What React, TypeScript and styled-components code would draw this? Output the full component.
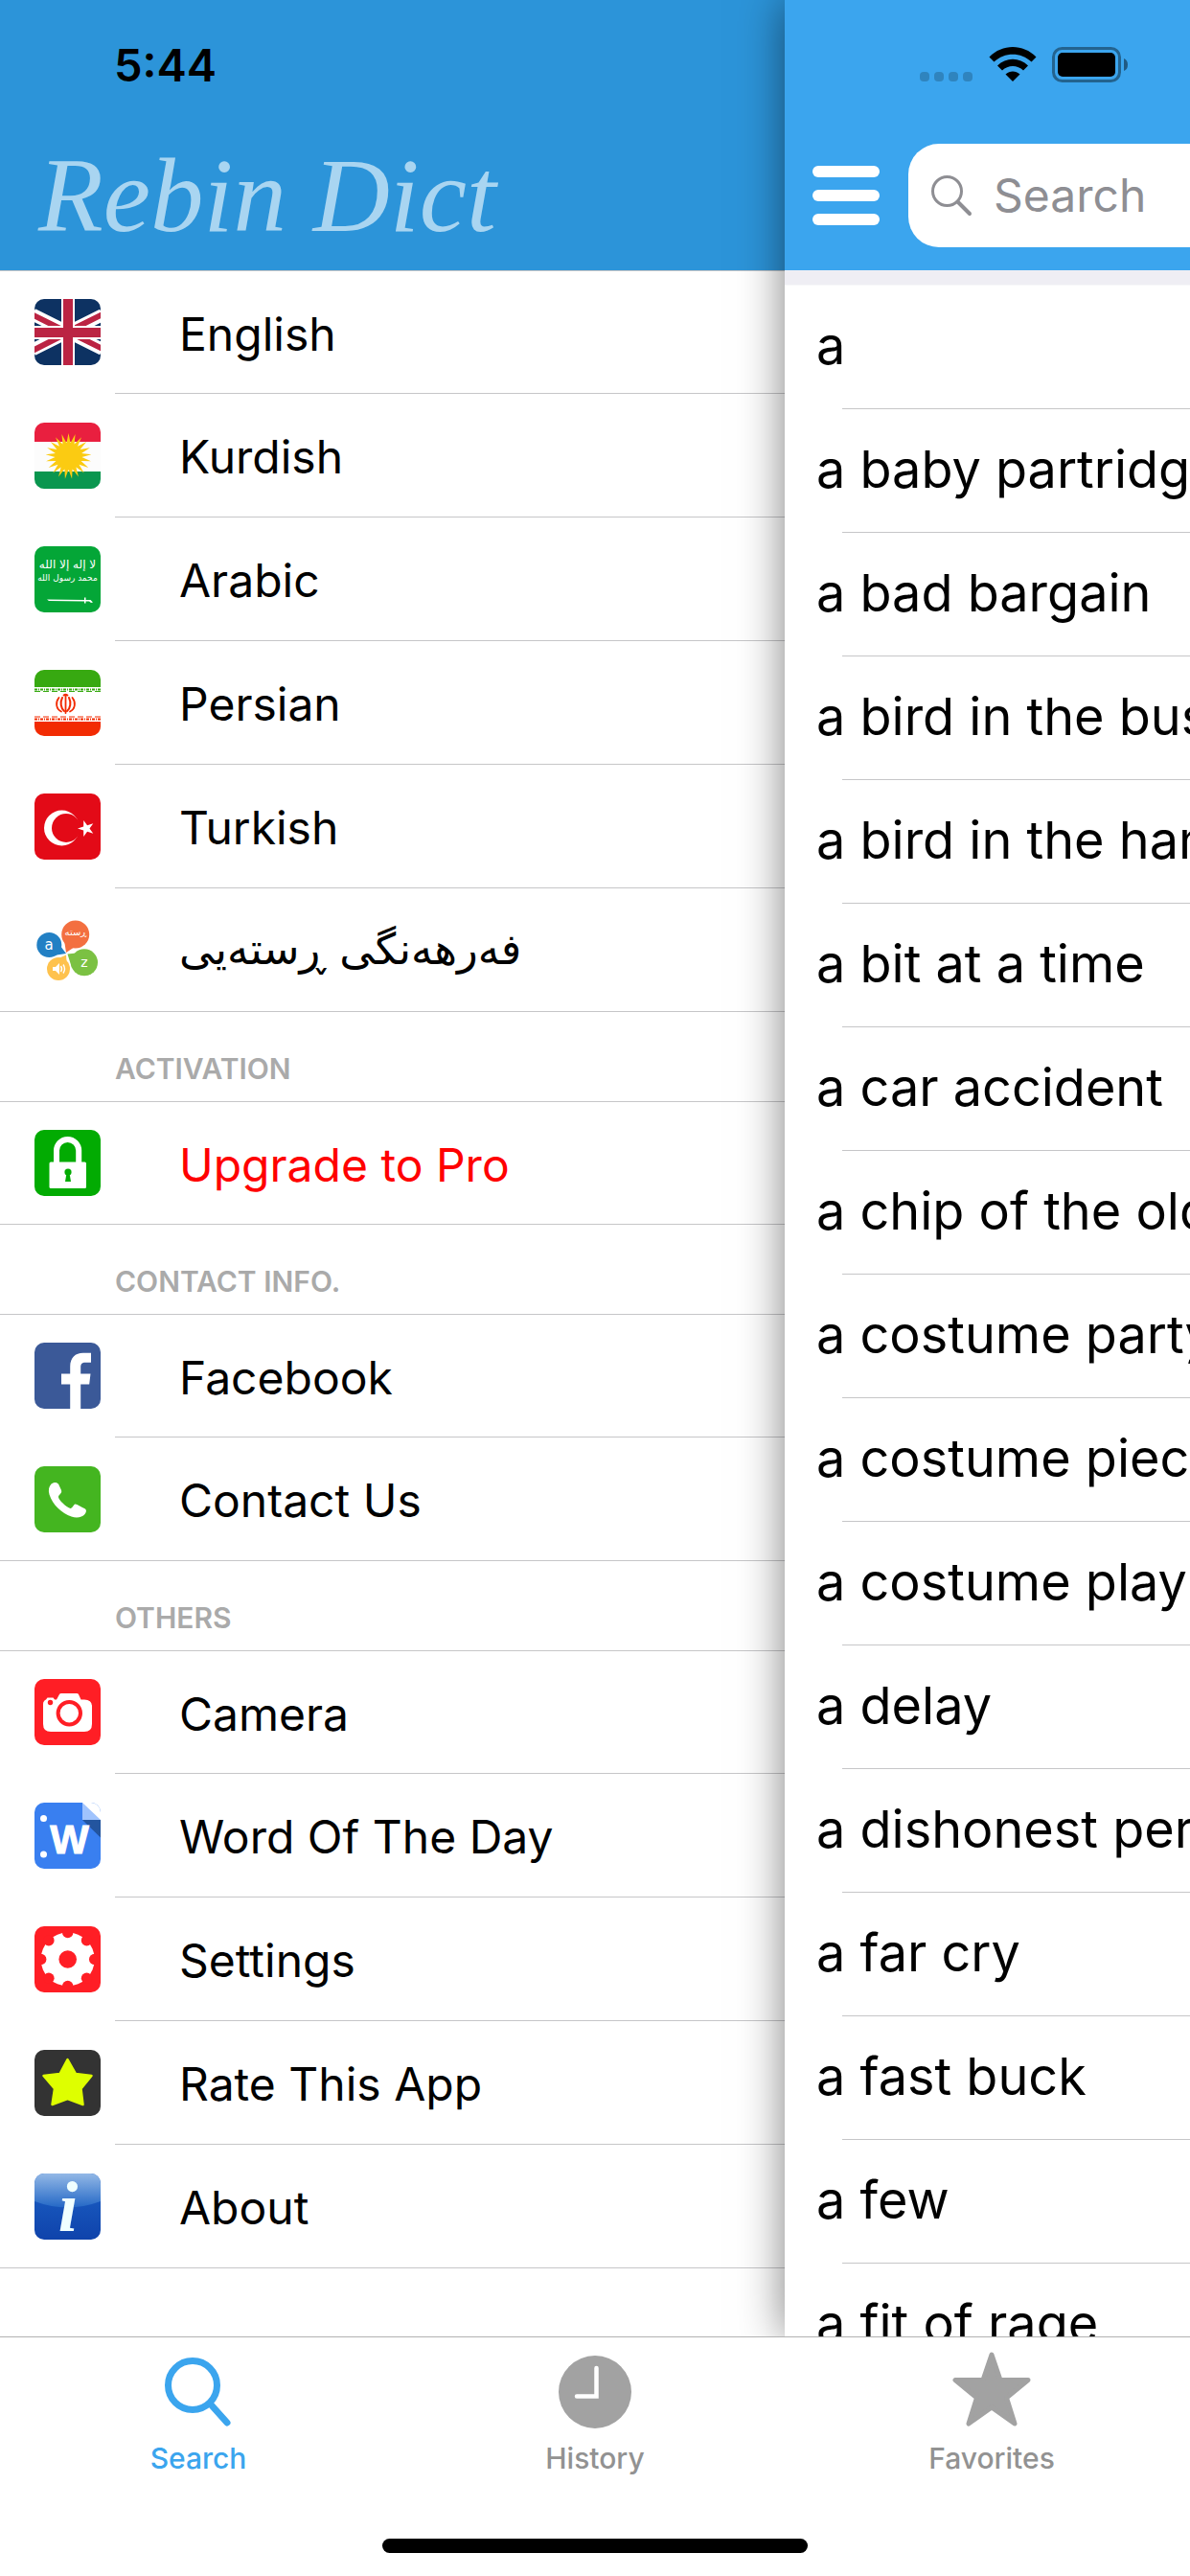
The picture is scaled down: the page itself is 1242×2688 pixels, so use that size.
import React from "react";
import styled, { createGlobalStyle } from "styled-components";

const GlobalStyle = createGlobalStyle`
  *, *::before, *::after { box-sizing: border-box; }
  body { margin: 0; background: #fff; }
  button, input { font: inherit; }
  ul { list-style: none; margin: 0; padding: 0; }
  h1, h2 { margin: 0; }
`;

const hairline = "#c6c6c8";
const brand = "#3ba5ee";
const sans = `Inter, "Liberation Sans", "DejaVu Sans", sans-serif`;

const Screen = styled.div`
  display: flex;
  flex-direction: column;
  height: 100vh;
  overflow: hidden;
  background: #fff;
  color: #000;
  font-family: ${sans};
`;

const Stage = styled.div`
  flex: 1;
  min-height: 0;
  display: grid;
  grid-template-columns: minmax(0, 1fr) 423px;
  grid-template-rows: minmax(0, 1fr);
  overflow: hidden;
`;

/* ---------- drawer ---------- */

const Drawer = styled.nav`
  min-width: 0;
  overflow: hidden;
  background: #fff;
`;

const DrawerHeader = styled.header`
  display: flex;
  flex-direction: column;
  justify-content: space-between;
  height: 282px;
  padding: 40px 40px 14px;
  background: #2c94d9;
`;

const Clock = styled.time`
  padding-left: 79px;
  font-size: 47px;
  line-height: 56px;
  font-weight: 600;
`;

const Brand = styled.h1`
  font-family: "Snell Roundhand", "Liberation Serif", serif;
  font-style: italic;
  font-weight: 400;
  font-size: 111px;
  line-height: 128px;
  white-space: nowrap;
  color: #a9d5f1;
`;

const SectionTitle = styled.h2`
  display: flex;
  align-items: flex-end;
  height: 93px;
  padding: 0 0 16px 120px;
  font-size: 30px;
  line-height: 36px;
  font-weight: 600;
  color: #aaa;
`;

const Rows = styled.ul`
  border-top: 1px solid ${hairline};
`;

const Row = styled.li<{ $inset: number }>`
  display: flex;
  flex-direction: column;
  height: 129px;

  ${Rows} > &:first-child { height: 128px; }

  &::after {
    content: "";
    height: 1px;
    margin-left: ${(p) => p.$inset}px;
    background: ${hairline};
  }
`;

const MenuRow = styled(Row)`
  &:last-child::after { margin-left: 0; }
`;

const MenuButton = styled.button<{ $color?: string }>`
  flex: 1;
  display: flex;
  align-items: center;
  gap: 82px;
  padding: 0 0 0 36px;
  border: 0;
  background: none;
  text-align: left;
  font-size: 48px;
  line-height: 60px;
  color: ${(p) => p.$color ?? "#000"};
  white-space: nowrap;
  cursor: pointer;
`;

const Label = styled.span`
  padding-top: 4px;

  &[dir="rtl"] {
    padding-top: 0;
    font-family: "DejaVu Sans", sans-serif;
    font-size: 45px;
  }
`;

const IconSvg = styled.svg`
  flex: none;
  width: 69px;
  height: 69px;
  border-radius: 10px;
`;

/* ---------- main panel ---------- */

const Panel = styled.main`
  position: relative;
  min-width: 0;
  background: #fff;
  box-shadow: 0 0 44px rgba(0, 0, 0, 0.5);
`;

const PanelHeader = styled.header`
  display: flex;
  flex-direction: column;
  justify-content: space-between;
  height: 282px;
  padding: 49px 0 24px;
  background: ${brand};
  overflow: hidden;
`;

const StatusIcons = styled.div`
  display: flex;
  justify-content: flex-end;
  align-items: flex-end;
  gap: 16px;
  height: 37px;
  padding-right: 64px;
`;

const Dots = styled.div`
  display: flex;
  gap: 5px;
  padding: 0 1px 1px 0;
`;

const Dot = styled.i`
  width: 10px;
  height: 10px;
  border-radius: 4px;
  background: rgba(0, 0, 0, 0.2);
`;

const SearchRow = styled.div`
  display: flex;
  align-items: center;
  gap: 30px;
  padding-left: 29px;
`;

const BurgerButton = styled.button`
  flex: none;
  display: flex;
  flex-direction: column;
  gap: 13px;
  width: 70px;
  padding: 0;
  border: 0;
  background: none;
  cursor: pointer;
`;

const Bar = styled.span`
  height: 12px;
  border-radius: 6px;
  background: #fff;
`;

const SearchField = styled.label`
  flex: 1;
  min-width: 0;
  display: flex;
  align-items: center;
  gap: 22px;
  height: 108px;
  padding-left: 24px;
  border-radius: 32px 0 0 32px;
  background: #fff;
`;

const SearchInput = styled.input`
  flex: 1;
  min-width: 0;
  padding: 0;
  border: 0;
  outline: 0;
  background: none;
  font-size: 48px;
  line-height: 60px;
  color: #000;
  &::placeholder { color: #8e8e93; opacity: 1; }
`;

const Band = styled.div`
  height: 16px;
  background: #efeef4;
  border-bottom: 1px solid #f7f7f9;
`;

const WordButton = styled.button`
  flex: 1;
  display: flex;
  align-items: center;
  padding: 0 0 2px 33px;
  border: 0;
  background: none;
  font-size: 54px;
  line-height: 68px;
  color: #000;
  white-space: nowrap;
  overflow: hidden;
  cursor: pointer;
`;

/* ---------- tab bar ---------- */

const TabBar = styled.footer`
  position: relative;
  display: flex;
  flex-direction: column;
  align-items: center;
  justify-content: space-between;
  height: 250px;
  padding-bottom: 24px;
  border-top: 1px solid #b2b2b2;
  background: #fff;
`;

const Tabs = styled.div`
  display: grid;
  grid-template-columns: repeat(3, 1fr);
  width: 100%;
`;

const Tab = styled.button<{ $active?: boolean }>`
  display: flex;
  flex-direction: column;
  align-items: center;
  gap: 11px;
  padding: 13px 0 0;
  border: 0;
  background: none;
  font-size: 30px;
  line-height: 36px;
  font-weight: 500;
  color: ${(p) => (p.$active ? brand : "#929292")};
  cursor: pointer;
`;

const TabGlyph = styled.svg<{ $active?: boolean }>`
  width: 86px;
  height: 84px;
  color: ${(p) => (p.$active ? brand : "#a2a2a2")};
`;

const HomeIndicator = styled.div`
  width: 444px;
  max-width: 60%;
  height: 15px;
  border-radius: 8px;
  background: #000;
`;

/* ---------- icons ---------- */

const Tile = ({ fill, children }: { fill: string; children?: React.ReactNode }) => (
  <IconSvg viewBox="0 0 69 69" aria-hidden="true">
    <rect width="69" height="69" fill={fill} />
    {children}
  </IconSvg>
);

const starPoints = (cx: number, cy: number, n: number, outer: number, inner: number, start = -90) =>
  Array.from({ length: n * 2 }, (_, i) => {
    const a = ((start + (i * 180) / n) * Math.PI) / 180;
    const r = i % 2 ? inner : outer;
    return `${(cx + r * Math.cos(a)).toFixed(2)},${(cy + r * Math.sin(a)).toFixed(2)}`;
  }).join(" ");

const EnglishIcon = () => (
  <Tile fill="#0d3262">
    <path d="M-2 16 L71 52.5 M-2 53 L71 16.5" stroke="#fff" strokeWidth="13" />
    <path d="M-2 16.5 L35 35 M35 34 L71 52 M-2 54 L35 35 M35 34 L71 16" stroke="#bb2443" strokeWidth="6" />
    <path d="M35 0V69M0 35H69" stroke="#fff" strokeWidth="14" />
    <path d="M35 0V69M0 35H69" stroke="#bb2443" strokeWidth="10" />
  </Tile>
);

const KurdishIcon = () => (
  <Tile fill="#fcfcfc">
    <rect width="69" height="20" fill="#e91f3f" />
    <rect y="51" width="69" height="18" fill="#0a964f" />
    <polygon points={starPoints(35.5, 35, 21, 24, 14)} fill="#fbcb12" />
  </Tile>
);

const ArabicIcon = () => (
  <Tile fill="#04a637">
    <g fill="#fff" fontFamily='"DejaVu Sans", sans-serif' textAnchor="middle">
      <text x="34.500" y="23" fontSize="12">لا إله إلا الله</text>
      <text x="34.500" y="36" fontSize="9">محمد رسول الله</text>
    </g>
    <path d="M13 55.5 L52 56 V53.500h1.500V56h5l2.500 2.500-2 .5-2-1.500h-3.500V59.500h-1.500V57.500L15 57z" fill="#fff" />
  </Tile>
);

const PersianIcon = () => (
  <Tile fill="#fff">
    <rect width="69" height="18" fill="#37a911" />
    <rect y="54" width="69" height="15" fill="#f22b03" />
    <path d="M0 20.500H69" stroke="#37a911" strokeWidth="2" strokeDasharray="3 1 1 1" />
    <path d="M0 22.500H69" stroke="#37a911" strokeWidth="1" strokeDasharray="6 3" />
    <path d="M0 51.500H69" stroke="#f22b03" strokeWidth="2" strokeDasharray="3 1 1 1" />
    <path d="M0 49H69" stroke="#f22b03" strokeWidth="1" strokeDasharray="6 3" />
    <g fill="none" stroke="#f22b03" strokeLinecap="round">
      <path d="M32.500 27v18M30.500 26.500q2-1.500 4 0" strokeWidth="1.800" />
      <path d="M29 29c-2.500 5-1.500 11 2 14M36 29c2.500 5 1.500 11-2 14" strokeWidth="2" />
      <path d="M25.500 29c-4 5-3 12 2.500 14.500M39.500 29c4 5 3 12-2.500 14.500" strokeWidth="1.800" />
    </g>
  </Tile>
);

const TurkishIcon = () => (
  <Tile fill="#e30a17">
    <circle cx="28.500" cy="36" r="18.500" fill="#fff" />
    <circle cx="33" cy="36" r="15" fill="#e30a17" />
    <polygon points={starPoints(54, 36.500, 5, 9, 3.500, 180)} fill="#fff" />
  </Tile>
);

const SentencesIcon = () => (
  <IconSvg viewBox="0 0 69 69" aria-hidden="true">
    <path d="M31 24 L33 37 L42 31z" fill="#f36f40" />
    <circle cx="42.700" cy="18" r="14.500" fill="#f36f40" />
    <path d="M27 30 L33 38 L20 40z" fill="#2280c4" />
    <circle cx="15.300" cy="29" r="13" fill="#2280c4" />
    <path d="M25 43 L33 39.500 L34 52z" fill="#fec24d" />
    <circle cx="25" cy="54" r="12" fill="#fec24d" />
    <path d="M39 53 L34.500 38.500 L48 37z" fill="#7bc143" />
    <circle cx="52" cy="47.300" r="14" fill="#7bc143" />
    <g fill="#fff" textAnchor="middle" fontFamily='"DejaVu Sans", sans-serif'>
      <text x="15" y="33.500" fontSize="15">a</text>
      <text x="52" y="51.500" fontSize="14">z</text>
      <text x="43" y="19" fontSize="10">ڕستە</text>
    </g>
    <path d="M19 52h3l4-4v12l-4-4h-3z" fill="#fff" />
    <path d="M27.500 51q2 3 0 6M30 49.500q3 4.500 0 9" fill="none" stroke="#fff" strokeWidth="1.400" />
  </IconSvg>
);

const LockIcon = () => (
  <Tile fill="#02ab02">
    <path d="M23 36V21.500a11.600 11.600 0 0 1 23.200 0V36" fill="none" stroke="#fff" strokeWidth="6" />
    <rect x="15.500" y="33.500" width="38.500" height="27.500" rx="1.500" fill="#fff" />
    <circle cx="35" cy="44" r="3.600" fill="#02ab02" />
    <path d="M33.500 45h3l1.500 9h-6z" fill="#02ab02" />
  </Tile>
);

const FacebookIcon = () => (
  <Tile fill="#3b5998">
    <path d="M37.200 69V43.600H28V32.500h9.200V25c0-9 5.300-14.200 13.600-14.200H59v10h-5.600c-4.200 0-5.200 1.800-5.200 5.200v6.500h10.300l-1.300 11.100h-9V69z" fill="#fff" />
  </Tile>
);

const PhoneIcon = () => (
  <Tile fill="#44b520">
    <path d="M17.500 18.500c2-2 6-2.200 7.500 0l3 6.500c.8 2-.5 3.500-2.500 5.500-1.500 1.500.500 4.500 3.500 7.500s6.500 5.500 8.500 6c2 .2 3-4 5-4.500 1.500-.2 7.500 3.500 9.500 4.500 3 1.500 2 4 .5 6-2.500 3-8 4.500-14 2.500C28.500 49 19 40.500 15.500 29.500c-1.300-4.500-.5-8.500 2-11z" fill="#fff" />
  </Tile>
);

const CameraIcon = () => (
  <Tile fill="#ff1e25">
    <path d="M9 26q0-3 3-4.500l1.500-2h6l1.500 2h2l3-5.500q.5-1 2-1h16q1.500 0 2 1l2.500 5.500H52q8 0 8 7V47q0 8-8 8H17q-8 0-8-8z" fill="#fff" />
    <circle cx="16.500" cy="24.500" r="2.700" fill="#ff1e25" />
    <circle cx="36.300" cy="35.700" r="11.700" fill="none" stroke="#ff1e25" strokeWidth="4" />
  </Tile>
);

const WordIcon = () => (
  <Tile fill="#397ff0">
    <rect x="50" width="19" height="18" fill="#fff" />
    <path d="M50 0L69 18H50z" fill="#a0c3fd" />
    <path d="M50 18H69V36.500z" fill="#23559f" />
    <circle cx="9.500" cy="16.500" r="3.500" fill="#fff" />
    <circle cx="9.500" cy="54" r="3.500" fill="#fff" />
    <text x="36.500" y="53" fontSize="43" fontWeight="700" fill="#fff" stroke="#fff" strokeWidth="1" textAnchor="middle" fontFamily='"Liberation Sans", sans-serif'>W</text>
  </Tile>
);

const SettingsIcon = () => (
  <Tile fill="#ff1e25">
    <circle cx="34.700" cy="34.500" r="28" fill="#fff" />
    {Array.from({ length: 8 }, (_, i) => (
      <circle key={i} cx={34.7 + 28 * Math.cos((i * Math.PI) / 4)} cy={34.5 + 28 * Math.sin((i * Math.PI) / 4)} r="5.700" fill="#ff1e25" />
    ))}
    <circle cx="34.700" cy="34.500" r="9.300" fill="#ff1e25" />
  </Tile>
);

const RateIcon = () => (
  <Tile fill="#333">
    <path d="M34.500 10L26.500 25L9.500 27L21 40.500L18.500 57L34.500 51L50.500 57L48.500 40.500L59.500 27L43 25z" fill="#deff00" stroke="#deff00" strokeWidth="2.500" strokeLinejoin="round" />
  </Tile>
);

const AboutIcon = () => (
  <Tile fill="url(#about-bg)">
    <defs>
      <linearGradient id="about-bg" x1="0" y1="0" x2="0" y2="1">
        <stop offset="0" stopColor="#1d63c8" />
        <stop offset="1" stopColor="#0f43ab" />
      </linearGradient>
      <linearGradient id="about-gloss" x1="0" y1="0" x2="0" y2="1">
        <stop offset="0" stopColor="#93b8e6" />
        <stop offset="1" stopColor="#2468c6" />
      </linearGradient>
    </defs>
    <path d="M0 0H69V29Q34.500 42 0 29z" fill="url(#about-gloss)" />
    <text x="35" y="60" fontSize="74" fontWeight="700" fontStyle="italic" fill="#f0ffff" textAnchor="middle" fontFamily='"Liberation Serif", serif'>i</text>
  </Tile>
);

const WifiIcon = () => (
  <svg width="50" height="37" viewBox="0 0 50 37" role="img" aria-label="Wi-Fi">
    <path d="M0.500 10.500C14-3.500 36-3.500 49.500 10.500L44.500 15.500C33.500 5 16.500 5 5.500 15.500z" />
    <path d="M9 19.500C18 10.500 32 10.500 41 19.500L36 24.500C30 18.500 20 18.500 14 24.500z" />
    <path d="M17.500 28.500C22 24.500 28 24.500 32.500 28.500L25 36z" />
  </svg>
);

const BatteryIcon = () => (
  <svg width="80" height="37" viewBox="0 0 80 37" role="img" aria-label="Battery full">
    <rect x="1.500" y="1.500" width="69" height="34" rx="9" fill="none" stroke="#000" strokeOpacity="0.4" strokeWidth="3" />
    <rect x="6" y="6" width="60" height="25" rx="5" />
    <path d="M75 12q4 1.500 4 6.500t-4 6.500z" fillOpacity="0.45" />
  </svg>
);

const Magnifier = () => (
  <svg width="43" height="43" viewBox="0 0 43 43" fill="none" stroke="#8e8e93" aria-hidden="true">
    <circle cx="16.500" cy="16.500" r="15" strokeWidth="3" />
    <path d="M28 28L40 40" strokeWidth="4" strokeLinecap="round" />
  </svg>
);

/* ---------- data ---------- */

type Item = { label: string; icon: React.ReactNode; color?: string; lang?: string };
type Group = { title?: string; items: Item[] };

const groups: Group[] = [
  {
    items: [
      { label: "English", icon: <EnglishIcon /> },
      { label: "Kurdish", icon: <KurdishIcon /> },
      { label: "Arabic", icon: <ArabicIcon /> },
      { label: "Persian", icon: <PersianIcon /> },
      { label: "Turkish", icon: <TurkishIcon /> },
      { label: "فەرهەنگی ڕستەیی", icon: <SentencesIcon />, lang: "ckb" },
    ],
  },
  { title: "ACTIVATION", items: [{ label: "Upgrade to Pro", icon: <LockIcon />, color: "#f00" }] },
  {
    title: "CONTACT INFO.",
    items: [
      { label: "Facebook", icon: <FacebookIcon /> },
      { label: "Contact Us", icon: <PhoneIcon /> },
    ],
  },
  {
    title: "OTHERS",
    items: [
      { label: "Camera", icon: <CameraIcon /> },
      { label: "Word Of The Day", icon: <WordIcon /> },
      { label: "Settings", icon: <SettingsIcon /> },
      { label: "Rate This App", icon: <RateIcon /> },
      { label: "About", icon: <AboutIcon /> },
    ],
  },
];

const words = [
  "a", "a baby partridge", "a bad bargain", "a bird in the bush", "a bird in the hand",
  "a bit at a time", "a car accident", "a chip of the old block", "a costume party",
  "a costume piece", "a costume play", "a delay", "a dishonest person", "a far cry",
  "a fast buck", "a few", "a fit of rage",
];

export default function App() {
  return (
    <>
      <GlobalStyle />
      <Screen>
        <Stage>
          <Drawer aria-label="Menu">
            <DrawerHeader>
              <Clock>5:44</Clock>
              <Brand>Rebin Dict</Brand>
            </DrawerHeader>
            {groups.map((group, i) => (
              <section key={i}>
                {group.title && <SectionTitle>{group.title}</SectionTitle>}
                <Rows>
                  {group.items.map((item) => (
                    <MenuRow key={item.label} $inset={120}>
                      <MenuButton type="button" $color={item.color}>
                        {item.icon}
                        <Label lang={item.lang} dir={item.lang ? "rtl" : undefined}>{item.label}</Label>
                      </MenuButton>
                    </MenuRow>
                  ))}
                </Rows>
              </section>
            ))}
          </Drawer>

          <Panel>
            <PanelHeader>
              <StatusIcons>
                <Dots><Dot /><Dot /><Dot /><Dot /></Dots>
                <WifiIcon />
                <BatteryIcon />
              </StatusIcons>
              <SearchRow>
                <BurgerButton type="button" aria-label="Toggle menu"><Bar /><Bar /><Bar /></BurgerButton>
                <SearchField>
                  <Magnifier />
                  <SearchInput type="text" placeholder="Search" aria-label="Search" />
                </SearchField>
              </SearchRow>
            </PanelHeader>
            <Band />
            <ul>
              {words.map((word) => (
                <Row key={word} $inset={60}>
                  <WordButton type="button">{word}</WordButton>
                </Row>
              ))}
            </ul>
          </Panel>
        </Stage>

        <TabBar>
          <Tabs>
            <Tab type="button" $active>
              <TabGlyph $active viewBox="0 0 86 84" fill="none" stroke="currentColor" aria-hidden="true">
                <circle cx="37" cy="37" r="25.500" strokeWidth="7" />
                <path d="M56 57L73 76" strokeWidth="7" strokeLinecap="round" />
              </TabGlyph>
              Search
            </Tab>
            <Tab type="button">
              <TabGlyph viewBox="0 0 86 84" aria-hidden="true">
                <circle cx="43" cy="44" r="38" fill="currentColor" />
                <path d="M24 48.500H44.500V19" fill="none" stroke="#fff" strokeWidth="4.500" strokeLinecap="round" />
              </TabGlyph>
              History
            </Tab>
            <Tab type="button">
              <TabGlyph viewBox="0 0 86 84" aria-hidden="true">
                <path d="M43 5L52 31.500H81L58.500 50L67 77L43 60L19 77L27.500 50L5 31.500H34z" fill="currentColor" stroke="currentColor" strokeWidth="5" strokeLinejoin="round" />
              </TabGlyph>
              Favorites
            </Tab>
          </Tabs>
          <HomeIndicator />
        </TabBar>
      </Screen>
    </>
  );
}
